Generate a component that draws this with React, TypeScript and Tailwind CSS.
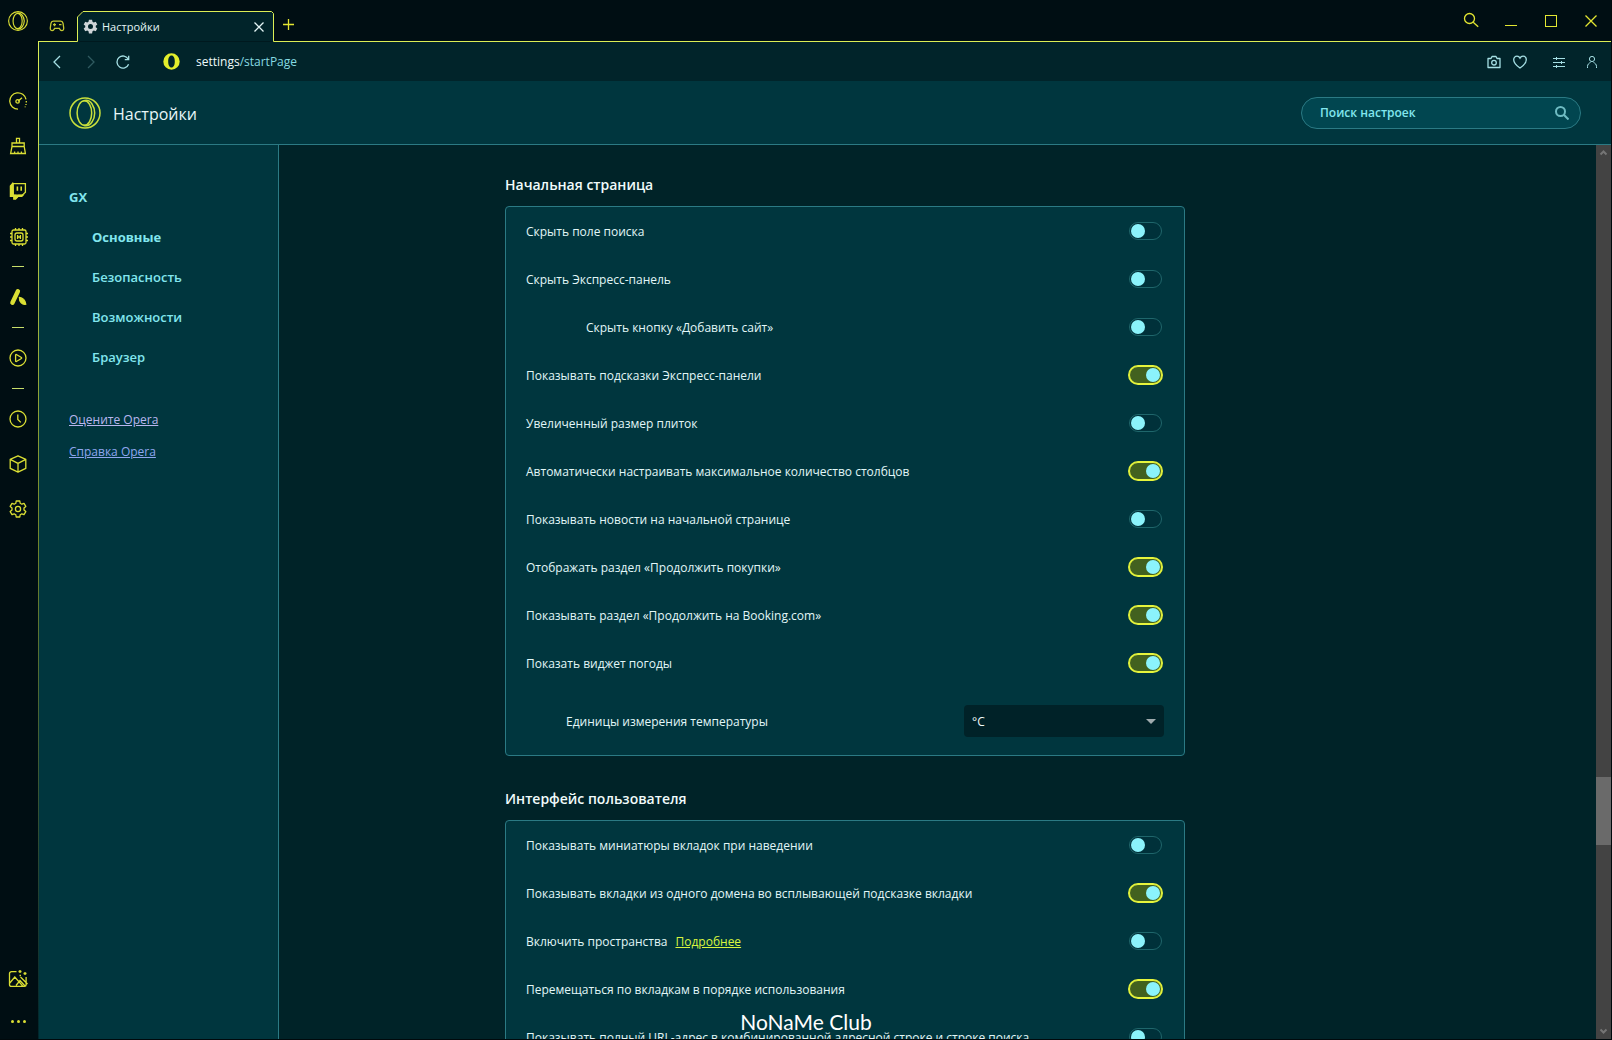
import type { ReactNode } from 'react';
import clsx from 'clsx';

interface Setting {
    id: string;
    label: string;
    on: boolean;
    nested?: boolean;
    more?: boolean;
}

const startPage: Setting[] = [
    { id: 'hide-search', label: 'Скрыть поле поиска', on: false },
    { id: 'hide-speed-dial', label: 'Скрыть Экспресс-панель', on: false },
    { id: 'hide-add-site', label: 'Скрыть кнопку «Добавить сайт»', on: false, nested: true },
    { id: 'suggestions', label: 'Показывать подсказки Экспресс-панели', on: true },
    { id: 'big-tiles', label: 'Увеличенный размер плиток', on: false },
    { id: 'auto-columns', label: 'Автоматически настраивать максимальное количество столбцов', on: true },
    { id: 'news', label: 'Показывать новости на начальной странице', on: false },
    { id: 'shopping', label: 'Отображать раздел «Продолжить покупки»', on: true },
    { id: 'booking', label: 'Показывать раздел «Продолжить на Booking.com»', on: true },
    { id: 'weather', label: 'Показать виджет погоды', on: true },
];

const userInterface: Setting[] = [
    { id: 'tab-preview', label: 'Показывать миниатюры вкладок при наведении', on: false },
    { id: 'same-domain', label: 'Показывать вкладки из одного домена во всплывающей подсказке вкладки', on: true },
    { id: 'workspaces', label: 'Включить пространства', on: false, more: true },
    { id: 'tab-cycle', label: 'Перемещаться по вкладкам в порядке использования', on: true },
    { id: 'full-url', label: 'Показывать полный URL-адрес в комбинированной адресной строке и строке поиска', on: false },
];

const sections = ['Основные', 'Безопасность', 'Возможности', 'Браузер'];

interface IconProps {
    size?: number;
    children: ReactNode;
    className?: string;
    strokeWidth?: number;
}

// All line icons are drawn on a grid equal to their size
function Icon({ size = 18, children, className, strokeWidth = 1.3 }: IconProps) {
    return (
        <svg
            width={size}
            height={size}
            viewBox={`0 0 ${size} ${size}`}
            fill="none"
            stroke="currentColor"
            strokeWidth={strokeWidth}
            className={clsx('shrink-0', className)}
            aria-hidden="true"
        >
            {children}
        </svg>
    );
}

function OperaRing({ size, strokeWidth }: { size: number; strokeWidth: number }) {
    return (
        <svg width={size} height={size} viewBox="0 0 32 32" fill="none" stroke="currentColor" strokeWidth={strokeWidth} aria-hidden="true">
            <circle cx="16" cy="16" r="15" />
            <ellipse cx="15.4" cy="16" rx="7.3" ry="12.2" />
            <path d="M14.5 3.8C18 2.6 21 4 23 7C26.6 12.4 26.6 19.6 23 25C21 28 18 29.4 14.5 28.2" />
        </svg>
    );
}

function Toggle({ id, on }: { id: string; on: boolean }) {
    return (
        <input
            id={id}
            type="checkbox"
            role="switch"
            defaultChecked={on}
            className="relative mr-0.5 h-[18px] w-[33px] shrink-0 appearance-none rounded-full border border-[#1f666b] bg-[#00313a] before:absolute before:top-px before:left-px before:size-3.5 before:rounded-full before:bg-[#8bf3fb] checked:border-[#e6f53c] checked:bg-[#42611f] checked:ring-1 checked:ring-[#e6f53c] checked:before:left-4"
        />
    );
}

function SettingRow({ setting }: { setting: Setting }) {
    return (
        <div className="flex h-12 items-center justify-between px-5">
            <div className={clsx('flex gap-2 pt-0.5', setting.nested && 'pl-[60px]')}>
                <label htmlFor={setting.id}>{setting.label}</label>
                {setting.more && <a href="#workspaces" className="text-[#d9f53f] underline">Подробнее</a>}
            </div>
            <Toggle id={setting.id} on={setting.on} />
        </div>
    );
}

function Section({ title, children }: { title: string; children: ReactNode }) {
    return (
        <section className="w-full max-w-[680px]">
            <h2 className="mb-2.5 text-sm leading-[22px] font-semibold text-[#f0fbfb]">{title}</h2>
            <div className="rounded border border-[#2b7a84] bg-[#00363e]">{children}</div>
        </section>
    );
}

function SideButton({ label, children }: { label: string; children: ReactNode }) {
    return (
        <button type="button" aria-label={label} className="flex h-[45px] w-full shrink-0 items-center justify-center pr-0.5">
            {children}
        </button>
    );
}

function Divider() {
    return (
        <div className="flex h-4 w-full items-center justify-center pr-0.5">
            <span className="h-px w-3 bg-[#c8de6a]" />
        </div>
    );
}

function Sidebar() {
    return (
        <aside className="flex w-[38px] shrink-0 flex-col bg-[#000e13] text-[#dadf34]">
            <button type="button" aria-label="Меню" className="mb-9 flex h-[42px] items-center justify-center pr-0.5">
                <OperaRing size={20} strokeWidth={1.8} />
            </button>
            <SideButton label="GX Control">
                <Icon>
                    <path d="M9 17.2A8.2 8.2 0 1 1 17 7.4" />
                    <path d="M17.3 9v1.4M17 12v1M16.2 14.4v.8" />
                    <path d="M9 9.2l4-3.4" />
                    <circle cx="8.6" cy="9.4" r="1.7" />
                </Icon>
            </SideButton>
            <SideButton label="GX Cleaner">
                <Icon>
                    <path d="M7.5 6V1.4h3V6M3 6h12.2v3.5H3zM3 9.5L1.6 16.5h14.8L15.2 9.5M5.6 16.5v-2M12.4 16.5v-2M9 16.5v-2" />
                </Icon>
            </SideButton>
            <SideButton label="Twitch">
                <Icon>
                    <path d="M4.2 1.6h12.2v8.6L13 13.4H9.6L6.6 16v-2.6H4.2z" />
                    <path d="M3.6 1.4L1.4 4v10.4h3.4V17h1.8l2.6-2.6h3.6l1.2-1.2H4.2z" fill="currentColor" />
                    <path d="M8.4 4.6v4.2M12.2 4.6v4.2" strokeWidth={1.6} />
                </Icon>
            </SideButton>
            <SideButton label="Hot Tabs Killer">
                <Icon size={20} className="mt-0.5 ml-0.5">
                    <rect x="3" y="3" width="14" height="14" rx="1.5" />
                    <rect x="6" y="6" width="8" height="8" rx="2" />
                    <path d="M8.6 8v4M11.4 8v4M8.6 10h2.8" />
                    <path d="M6.5 1v2M10 1v2M13.5 1v2M6.5 17v2M10 17v2M13.5 17v2M1 6.5h2M1 10h2M1 13.5h2M17 6.5h2M17 10h2M17 13.5h2" />
                </Icon>
            </SideButton>
            <Divider />
            <SideButton label="Aria">
                <Icon>
                    <path d="M8.9 3.2L3.4 14.8" strokeWidth={4.4} strokeLinecap="round" />
                    <path d="M10.4 9.4c3.2.2 6 2.8 6.4 6.8-3.4.8-6.6-2-6.4-6.8z" fill="currentColor" />
                </Icon>
            </SideButton>
            <Divider />
            <SideButton label="Плеер">
                <Icon>
                    <circle cx="9" cy="9" r="8" />
                    <path d="M6.6 6v6c0 .5.4.7.8.5l5-3c.4-.3.4-.7 0-1l-5-3c-.4-.2-.8 0-.8.5z" />
                </Icon>
            </SideButton>
            <Divider />
            <SideButton label="История">
                <Icon>
                    <circle cx="9" cy="9" r="8" />
                    <path d="M8.8 4.4v5l3 3" />
                </Icon>
            </SideButton>
            <SideButton label="Расширения">
                <Icon>
                    <path d="M9 .8l7.8 3.6v9L9 17.2l-7.8-3.8v-9zM1.2 4.4L9 8.4l7.8-4M9 8.4v8.8" strokeLinejoin="round" />
                </Icon>
            </SideButton>
            <SideButton label="Настройки">
                <Icon>
                    <path d="M7.2 1h3.6l.4 2.3 1.6.9 2.2-.9 1.8 3.1-1.8 1.5v2.2l1.8 1.5-1.8 3.1-2.2-.9-1.6.9-.4 2.3H7.2l-.4-2.3-1.6-.9-2.2.9-1.8-3.1L3 10.1V7.9L1.2 6.4 3 3.3l2.2.9 1.6-.9z" strokeLinejoin="round" />
                    <circle cx="9" cy="9" r="2.6" />
                </Icon>
            </SideButton>
            <button type="button" aria-label="Обои" className="mt-auto flex h-12 items-center justify-center pr-0.5">
                <Icon size={20}>
                    <path d="M8.5 2.6H3.5a2 2 0 0 0-2 2v10.8a2 2 0 0 0 2 2h13a1.6 1.6 0 0 0 1.6-1.6V8M1.8 14l5-6 8.2 9.4M8 16.5l4-5 5 5.5M12.5 8l7 7" />
                    <path d="M12 1v3M10.5 2.5h3M17 3v3M15.5 4.5h3M11.5 6.5h1.5" />
                </Icon>
            </button>
            <button type="button" aria-label="Ещё" className="flex h-9 items-center justify-center gap-[3px] pr-0.5">
                <span className="size-[3px] rounded-full bg-current" />
                <span className="size-[3px] rounded-full bg-current" />
                <span className="size-[3px] rounded-full bg-current" />
            </button>
        </aside>
    );
}

function TabStrip() {
    return (
        <div className="flex h-[42px] items-end bg-[#000e13] text-[#e3e632]">
            <div className="flex h-full w-[39px] items-center justify-center border-b border-[#dcee55] pt-2.5 pr-0.5">
                <button type="button" aria-label="GX Corner" className="text-[#c3c832]">
                    <Icon size={16}>
                        <path d="M4.2 3.2h7.6c1.4 0 2 .8 2.3 2.3l.6 4.3c.2 1.6-.6 2.8-1.9 2.8-1 0-1.7-.7-2.5-2.2H5.7c-.8 1.5-1.5 2.2-2.5 2.2-1.3 0-2.1-1.2-1.9-2.8l.6-4.3c.3-1.5.9-2.3 2.3-2.3z" />
                        <path d="M4 6.7h3M5.5 5.2v3M10 6.7h2.5" />
                    </Icon>
                </button>
            </div>
            <div className="relative flex h-[31px] w-[197px] shrink-0 items-center pl-1.5 text-[#e4f6f6]">
                <svg viewBox="0 0 197 31" className="absolute inset-0 h-full w-full" fill="#01242a" stroke="#dcee55" aria-hidden="true">
                    <path d="M0 30.5H.5V6L6 .5H194.5L196.5 2.5V30.5H197" />
                </svg>
                <svg width="15" height="15" viewBox="0 0 24 24" className="relative" fill="#cfd5d8" aria-hidden="true">
                    <path fillRule="evenodd" d="M9.5 1h5l.7 3.3 2 1.2 3.2-1.1 2.5 4.3-2.5 2.2v2.2l2.5 2.2-2.5 4.3-3.2-1.1-2 1.2-.7 3.3h-5l-.7-3.3-2-1.2-3.2 1.1-2.5-4.3 2.5-2.2v-2.2L1.1 8.7l2.5-4.3 3.2 1.1 2-1.2zM12 8a4 4 0 1 0 0 8 4 4 0 0 0 0-8z" />
                </svg>
                <span className="relative ml-1 flex-1 text-[11px]">Настройки</span>
                <button type="button" aria-label="Закрыть вкладку" className="relative mr-2.5">
                    <Icon size={10}>
                        <path d="M.5.5l9 9M9.5.5l-9 9" />
                    </Icon>
                </button>
            </div>
            <div className="flex h-full flex-1 justify-between border-b border-[#dcee55]">
                <button type="button" aria-label="Новая вкладка" className="ml-[9px] pt-[7px]">
                    <Icon size={11}>
                        <path d="M5.5 0v11M0 5.5h11" />
                    </Icon>
                </button>
                <div className="flex">
                    <button type="button" aria-label="Поиск вкладок" className="flex w-10 items-center justify-center pb-0.5">
                        <Icon size={16}>
                            <circle cx="6.5" cy="6.5" r="5" />
                            <path d="M10.2 10.2l5 4.6" />
                        </Icon>
                    </button>
                    <button type="button" aria-label="Свернуть" className="flex w-10 items-center justify-center pt-2.5">
                        <span className="h-px w-3 bg-current" />
                    </button>
                    <button type="button" aria-label="Развернуть" className="flex w-10 items-center justify-center">
                        <span className="size-3 border border-current" />
                    </button>
                    <button type="button" aria-label="Закрыть" className="flex w-10 items-center justify-center">
                        <Icon size={12}>
                            <path d="M.5.5l11 11M11.5.5l-11 11" />
                        </Icon>
                    </button>
                </div>
            </div>
        </div>
    );
}

function AddressBar() {
    return (
        <div className="flex h-[39px] items-center bg-[#01242a] text-[#a5dfe4]">
            <div className="flex w-[102px] items-center">
                <button type="button" aria-label="Назад" className="flex w-9 justify-center">
                    <Icon size={14}>
                        <path d="M10 1L4 7l6 6" />
                    </Icon>
                </button>
                <button type="button" aria-label="Вперёд" disabled className="flex w-8 justify-center text-[#2f5a60]">
                    <Icon size={14}>
                        <path d="M4 1l6 6-6 6" />
                    </Icon>
                </button>
                <button type="button" aria-label="Обновить" className="flex w-8 justify-center">
                    <Icon size={14}>
                        <path d="M12.6 9.2A6 6 0 1 1 12.3 4.2M12.7.8v3.9H8.8" />
                    </Icon>
                </button>
            </div>
            <svg width="17" height="17" viewBox="0 0 17 17" className="mr-4 ml-[22px]" fill="#e3ee2c" aria-hidden="true">
                <path fillRule="evenodd" d="M8.5.3a8.2 8.2 0 1 1 0 16.4 8.2 8.2 0 0 1 0-16.4zM8.5 2.5C6.4 2.5 5.2 5 5.2 8.5s1.2 6 3.3 6 3.3-2.5 3.3-6-1.2-6-3.3-6z" />
            </svg>
            <div role="textbox" aria-label="Адрес" className="flex-1">
                <span className="text-[#f0fbfb]">settings</span><span className="text-[#86dbe2]">/startPage</span>
            </div>
            <button type="button" aria-label="Снимок" className="mr-3">
                <Icon size={14}>
                    <path d="M1 3.5h3L5 1.5h4l1 2h3v9H1z" strokeLinejoin="round" />
                    <circle cx="7" cy="7.7" r="2.3" />
                </Icon>
            </button>
            <button type="button" aria-label="В закладки" className="mr-[26px]">
                <Icon size={14}>
                    <path d="M7 13C3 10.2.7 7.6.7 4.7.7 2.6 2.2 1.2 4 1.2c1.3 0 2.4.7 3 1.9.6-1.2 1.7-1.9 3-1.9 1.8 0 3.3 1.4 3.3 3.5C13.3 7.6 11 10.2 7 13z" />
                </Icon>
            </button>
            <button type="button" aria-label="Простая настройка" className="mr-5">
                <Icon size={12} strokeWidth={1}>
                    <path d="M0 2.5h12M0 6.5h12M0 10.5h12M3.5 1v3M8.5 5v3M3.5 9v3" />
                </Icon>
            </button>
            <button type="button" aria-label="Профиль" className="mr-3">
                <Icon size={14} strokeWidth={1}>
                    <circle cx="7" cy="4" r="2.6" />
                    <path d="M2.5 13V11.5C2.5 9.4 4 8 5.5 7.5M11.5 13V11.5C11.5 9.4 10 8 8.5 7.5" />
                </Icon>
            </button>
        </div>
    );
}

function Scrollbar() {
    return (
        <div className="flex w-[15px] shrink-0 flex-col items-center bg-[#434343] text-[#757575]" aria-hidden="true">
            <Icon size={15} strokeWidth={2}>
                <path d="M4.5 9.5l3-3 3 3" />
            </Icon>
            <div className="flex-[617]" />
            <div className="w-full flex-[68] bg-[#6a6a6a]" />
            <div className="flex-[179]" />
            <Icon size={15} strokeWidth={2}>
                <path d="M4.5 5.5l3 3 3-3" />
            </Icon>
        </div>
    );
}

export default function App() {
    return (
        <div className="flex h-screen overflow-hidden border-r border-b border-[#00090c] bg-[#000e13] font-['Open_Sans','Noto_Sans',sans-serif] text-xs leading-5">
            <Sidebar />
            <div className="flex min-w-0 flex-1 flex-col">
                <TabStrip />
                <div className="flex min-h-0 flex-1">
                    <div className="w-px shrink-0 bg-linear-to-b from-[#dcee55] via-[#71842a] to-[#00262b]" />
                    <div className="flex min-w-0 flex-1 flex-col">
                        <AddressBar />
                        <header className="flex h-16 shrink-0 items-center justify-between border-b border-[#2b7a84] bg-[#00363e] px-[30px]">
                            <div className="flex items-center gap-3 text-[#c8e03c]">
                                <OperaRing size={32} strokeWidth={1.5} />
                                <h1 className="pt-0.5 text-base text-[#e8f7f8]">Настройки</h1>
                            </div>
                            <div className="flex h-8 w-[280px] items-center rounded-full border border-[#2b7a84] bg-[#014650] pr-[11px] pl-[18px]">
                                <input
                                    type="search"
                                    aria-label="Поиск настроек"
                                    placeholder="Поиск настроек"
                                    className="min-w-0 flex-1 bg-transparent font-semibold outline-none placeholder:text-[#82e6ee]"
                                />
                                <Icon size={14} strokeWidth={2} className="text-[#6fbcc3]">
                                    <circle cx="5.5" cy="5.5" r="4.5" />
                                    <path d="M8.8 8.8l4.7 4.7" />
                                </Icon>
                            </div>
                        </header>
                        <div className="flex min-h-0 flex-1 bg-[#002328]">
                            <nav className="flex w-60 shrink-0 flex-col border-r border-[#2b7a84] bg-[#00363e] px-[30px] pt-8 text-[#82e6ee]">
                                <a href="#gx" className="py-2.5 text-[13px] font-bold">GX</a>
                                {sections.map((name, index) => (
                                    <a key={name} href={`#${name}`} className={clsx('py-2.5 pl-[23px] text-[13px]', index === 0 ? 'font-bold' : 'font-semibold')}>
                                        {name}
                                    </a>
                                ))}
                                <a href="#rate" className="mt-[33px] text-[#b9b6ee] underline">Оцените Opera</a>
                                <a href="#help" className="mt-3 text-[#8fa6f0] underline">Справка Opera</a>
                            </nav>
                            <main className="flex min-w-0 flex-1 flex-col gap-8 overflow-hidden pt-[29px] pr-6 pl-[226px] text-[#e2f7f8]">
                                <Section title="Начальная страница">
                                    {startPage.map((setting) => (
                                        <SettingRow key={setting.id} setting={setting} />
                                    ))}
                                    <div className="flex h-[68px] items-center justify-between pr-5 pl-[60px]">
                                        <label htmlFor="temperature" className="pt-0.5">Единицы измерения температуры</label>
                                        <div className="relative">
                                            <select id="temperature" className="h-8 w-[200px] appearance-none rounded bg-[#002228] pt-0.5 pl-2 text-[#f0fbfb]">
                                                <option>°C</option>
                                                <option>°F</option>
                                            </select>
                                            <svg width="10" height="5" viewBox="0 0 10 5" className="absolute top-3.5 right-2" fill="#a0abae" aria-hidden="true">
                                                <path d="M0 0h10L5 5z" />
                                            </svg>
                                        </div>
                                    </div>
                                </Section>
                                <Section title="Интерфейс пользователя">
                                    {userInterface.map((setting) => (
                                        <SettingRow key={setting.id} setting={setting} />
                                    ))}
                                </Section>
                            </main>
                            <Scrollbar />
                        </div>
                    </div>
                </div>
            </div>
            <p className="absolute inset-x-0 bottom-1.5 text-center font-['Lato',sans-serif] text-[21px] leading-6 text-white">NoNaMe Club</p>
        </div>
    );
}
